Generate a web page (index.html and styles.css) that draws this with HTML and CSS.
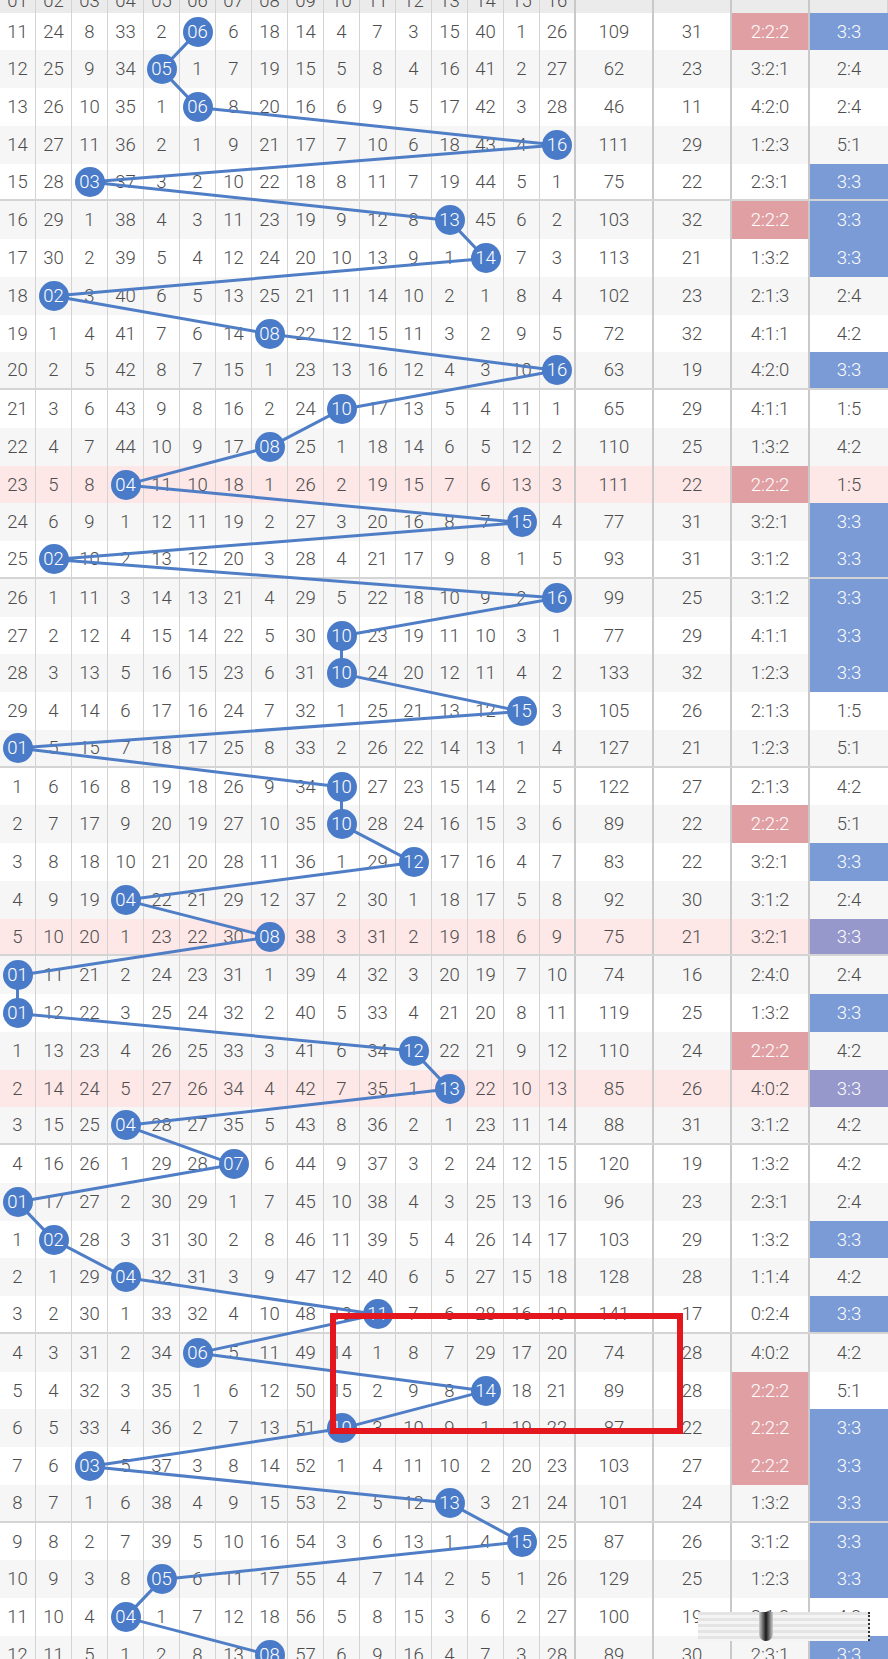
FILE: index.html
```html
<!DOCTYPE html>
<html lang="zh-CN">
<head>
<meta charset="utf-8">
<title>蓝球走势图</title>
<link rel="stylesheet" href="styles.css">
</head>
<body>
<div class="sheet">
  <div class="head">
    <div class="cell">01</div><div class="cell">02</div><div class="cell">03</div><div class="cell">04</div>
    <div class="cell">05</div><div class="cell">06</div><div class="cell">07</div><div class="cell">08</div>
    <div class="cell">09</div><div class="cell">10</div><div class="cell">11</div><div class="cell">12</div>
    <div class="cell">13</div><div class="cell">14</div><div class="cell">15</div><div class="cell k">16</div>
    <div class="cell k"></div><div class="cell k"></div><div class="cell k"></div><div class="cell"></div>
  </div>
  <div class="grid" id="grid">
    <svg class="trend" id="trend" xmlns="http://www.w3.org/2000/svg"><polyline id="trendline" points=""/></svg>
    <div class="mark"></div>
    <div class="smear"></div>
  </div>
</div>
<script src="script.js"></script>
</body>
</html>
```
FILE: styles.css
```css
html, body {
  margin: 0;
  padding: 0;
}
body {
  width: 888px;
  height: 1659px;
  overflow: hidden;
  background: #ffffff;
  font-family: Roboto, "Noto Sans", sans-serif;
  font-weight: 300;
  color: #4d4d4d;
}
.sheet {
  margin-top: -25.3px;
}
.head, .row {
  display: grid;
  grid-template-columns: repeat(16, 36px) 78px 78px 78px 78px;
}
.head {
  height: 38px;
  background: #ebebeb;
}
.head .cell {
  align-items: flex-end;
  padding-bottom: 3px;
  line-height: 18px;
}
.grid {
  position: relative;
}
.row {
  height: 37.75px;
  box-sizing: border-box;
  background: #ffffff;
}
.row.alt {
  background: #f6f6f6;
}
.row.pink {
  background: #fde7e7;
}
.row.sep {
  border-bottom: 2px solid #d4d4d4;
}
.cell {
  display: flex;
  align-items: center;
  justify-content: center;
  box-sizing: border-box;
  border-right: 1px solid #d3d3d3;
  font-size: 18.5px;
  white-space: nowrap;
}
.cell.k {
  border-right: 2px solid #c9c9c9;
}
.cell.end {
  border-right: 0;
}
.cell.red {
  background: #df9fa3;
  color: #ffffff;
}
.cell.blue {
  background: #7b9bd6;
  color: #ffffff;
}
.cell.purple {
  background: #9698cb;
  color: #ffffff;
}
.ball {
  position: relative;
  z-index: 2;
  width: 30px;
  height: 30px;
  border-radius: 50%;
  background: #4a7bc8;
  color: #ffffff;
  font-weight: 300;
  display: flex;
  align-items: center;
  justify-content: center;
  flex: none;
}
.trend {
  position: absolute;
  left: 0;
  top: 0;
  width: 576px;
  height: 1661px;
  z-index: 1;
  overflow: visible;
  pointer-events: none;
}
.trend polyline {
  fill: none;
  stroke: #4f7ec6;
  stroke-width: 3;
  stroke-linejoin: round;
  stroke-linecap: round;
}
.mark {
  position: absolute;
  left: 330px;
  top: 1300px;
  width: 353px;
  height: 121px;
  box-sizing: border-box;
  border: 6px solid #e3171d;
  z-index: 3;
}
.smear {
  position: absolute;
  left: 698px;
  top: 1599px;
  width: 170px;
  height: 29px;
  z-index: 3;
  background: repeating-linear-gradient(to bottom, #e4e4e4 0, #e4e4e4 3px, #f4f4f4 3px, #f4f4f4 6px);
  border-right: 2px dotted #333333;
}
.smear::before {
  content: "";
  position: absolute;
  left: 61px;
  top: 0;
  width: 14px;
  height: 29px;
  border-radius: 0 0 7px 7px;
  background: linear-gradient(to right, #cfcfcf, #1a1a1a 50%, #cfcfcf);
}
```
FILE: script.js
```js
(function () {
  var init = [11, 24, 8, 33, 2, 0, 6, 18, 14, 4, 7, 3, 15, 40, 1, 26];
  var hits = [6, 5, 6, 16, 3, 13, 14, 2, 8, 16, 10, 8, 4, 15, 2, 16, 10, 10, 15, 1, 10, 10, 12, 4, 8, 1, 1, 12, 13, 4, 7, 1, 2, 4, 11, 6, 14, 10, 3, 13, 15, 5, 4, 8];
  var sum = [109, 62, 46, 111, 75, 103, 113, 102, 72, 63, 65, 110, 111, 77, 93, 99, 77, 133, 105, 127, 122, 89, 83, 92, 75, 74, 119, 110, 85, 88, 120, 96, 103, 128, 141, 74, 89, 87, 103, 101, 87, 129, 100, 89];
  var span = [31, 23, 11, 29, 22, 32, 21, 23, 32, 19, 29, 25, 22, 31, 31, 25, 29, 32, 26, 21, 27, 22, 22, 30, 21, 16, 25, 24, 26, 31, 19, 23, 29, 28, 17, 28, 28, 22, 27, 24, 26, 25, 19, 30];
  var ratio = ["2:2:2", "3:2:1", "4:2:0", "1:2:3", "2:3:1", "2:2:2", "1:3:2", "2:1:3", "4:1:1", "4:2:0",
    "4:1:1", "1:3:2", "2:2:2", "3:2:1", "3:1:2", "3:1:2", "4:1:1", "1:2:3", "2:1:3", "1:2:3",
    "2:1:3", "2:2:2", "3:2:1", "3:1:2", "3:2:1", "2:4:0", "1:3:2", "2:2:2", "4:0:2", "3:1:2",
    "1:3:2", "2:3:1", "1:3:2", "1:1:4", "0:2:4", "4:0:2", "2:2:2", "2:2:2", "2:2:2", "1:3:2",
    "3:1:2", "1:2:3", "2:1:3", "2:3:1"];
  var last = ["3:3", "2:4", "2:4", "5:1", "3:3", "3:3", "3:3", "2:4", "4:2", "3:3",
    "1:5", "4:2", "1:5", "3:3", "3:3", "3:3", "3:3", "3:3", "1:5", "5:1",
    "4:2", "5:1", "3:3", "2:4", "3:3", "2:4", "3:3", "4:2", "3:3", "4:2",
    "4:2", "2:4", "3:3", "4:2", "3:3", "4:2", "5:1", "3:3", "3:3", "3:3",
    "3:3", "3:3", "4:2", "3:3"];
  var pink = { 13: true, 25: true, 29: true };

  var grid = document.getElementById("grid");
  var mark = grid.querySelector(".mark");
  var prev = init.slice();
  var balls = [];

  function cell(text, cls) {
    var d = document.createElement("div");
    d.className = "cell" + (cls ? " " + cls : "");
    if (text !== null) d.textContent = text;
    return d;
  }

  for (var r = 0; r < hits.length; r++) {
    var n = r + 1;
    var row = document.createElement("div");
    var cls = "row";
    if (r % 2 === 1) cls += " alt";
    if (pink[n]) cls += " pink";
    if (n % 5 === 0) cls += " sep";
    row.className = cls;
    var cur = [];
    for (var c = 0; c < 16; c++) {
      var v;
      var isHit = hits[r] === c + 1;
      if (isHit) v = 0;
      else v = (r === 0) ? init[c] : prev[c] + 1;
      cur.push(v);
      var d = cell(isHit ? null : String(v), c === 15 ? "k" : "");
      if (isHit) {
        var b = document.createElement("span");
        b.className = "ball";
        b.textContent = (c + 1 < 10 ? "0" : "") + (c + 1);
        d.appendChild(b);
        balls.push(b);
      }
      row.appendChild(d);
    }
    prev = cur;
    row.appendChild(cell(String(sum[r]), "k"));
    row.appendChild(cell(String(span[r]), "k"));
    row.appendChild(cell(ratio[r], "k" + (ratio[r] === "2:2:2" ? " red" : "")));
    var lc = "end";
    if (last[r] === "3:3" && n !== 43) lc += pink[n] ? " purple" : " blue";
    row.appendChild(cell(last[r], lc));
    grid.insertBefore(row, mark);
  }

  var g = grid.getBoundingClientRect();
  var pts = balls.map(function (b) {
    var q = b.getBoundingClientRect();
    return (q.left + q.width / 2 - g.left).toFixed(1) + "," + (q.top + q.height / 2 - g.top).toFixed(1);
  });
  document.getElementById("trendline").setAttribute("points", pts.join(" "));
})();
```
